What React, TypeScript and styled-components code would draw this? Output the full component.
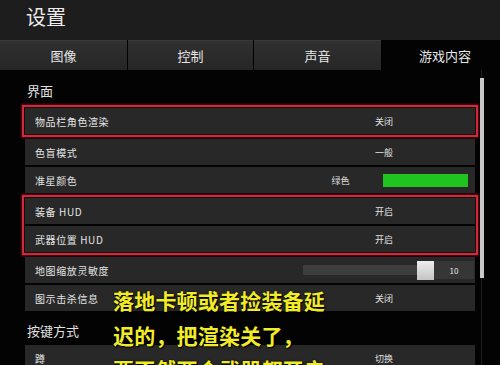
import React from "react";
import styled, { createGlobalStyle } from "styled-components";

const Global = createGlobalStyle`
  html, body { margin: 0; padding: 0; background: #000; }
  body { width: 500px; height: 365px; overflow: hidden; font-family: "Noto Sans CJK SC", "Noto Sans", sans-serif; }
`;

const Page = styled.div`
  position: relative;
  width: 500px;
  height: 365px;
  background: #030303;
  overflow: hidden;
  color: #e2e2e2;
`;

const Header = styled.div`
  height: 40px;
  background: #1d1d1d;
  padding: 4px 0 0 26px;
  box-sizing: border-box;
`;

const Title = styled.div`
  font-size: 20px;
  line-height: 26px;
  color: #ececec;
  letter-spacing: 0px;
`;

const Tabs = styled.div`
  display: grid;
  grid-template-columns: 127px 125px 127px 1fr;
  column-gap: 1px;
  height: 30px;
  background: #000;
`;

const Tab = styled.div<{ $active?: boolean }>`
  display: flex;
  align-items: center;
  justify-content: center;
  font-size: 13px;
  color: #e6e6e6;
  background: ${(p) => (p.$active ? "#030303" : "linear-gradient(#303030, #262626)")};
  border-top: 1px solid ${(p) => (p.$active ? "#030303" : "#3a3a3a")};
  box-sizing: border-box;
  padding-left: ${(p) => (p.$active ? "8px" : "0")};
`;

const Body = styled.div`
  display: flex;
  height: 295px;
`;

const List = styled.div`
  margin-left: 22px;
  width: 456px;
  padding-top: 3px;
  display: flex;
  flex-direction: column;
  gap: 2px;
`;

const SectionTitle = styled.div`
  height: 30px;
  display: flex;
  align-items: flex-end;
  padding: 0 0 4px 5px;
  box-sizing: border-box;
  font-size: 13px;
  line-height: 16px;
  color: #e0e0e0;
  flex-shrink: 0;
`;

const Highlight = styled.div`
  border: 2px solid #cf2a3c;
  box-shadow: 0 0 2px 1px rgba(120, 15, 30, 0.8), inset 0 0 2px rgba(120, 15, 30, 0.8);
  padding: 1px 1px;
  display: flex;
  flex-direction: column;
  gap: 2px;
  flex-shrink: 0;
`;

const Row = styled.div<{ $inset?: boolean }>`
  height: 26px;
  margin: 0 ${(p) => (p.$inset ? "0" : "3px")};
  background: #282828;
  display: flex;
  align-items: center;
  flex-shrink: 0;
`;

const Label = styled.div`
  flex: 1;
  padding-left: 10px;
  font-size: 10px;
  letter-spacing: 0.6px;
  color: #e4e4e4;
`;

const Control = styled.div`
  width: 180px;
  margin-right: 1px;
  height: 100%;
  display: flex;
  align-items: center;
`;

const Value = styled.div`
  flex: 1;
  text-align: center;
  font-size: 9px;
  color: #e0e0e0;
`;

const ColorName = styled.div`
  width: 89px;
  text-align: center;
  font-size: 9px;
  color: #e0e0e0;
  padding-left: 4px;
  box-sizing: border-box;
`;

const Swatch = styled.div`
  width: 85px;
  height: 13px;
  background: #1fc41f;
`;

const Slider = styled.div`
  display: flex;
  align-items: center;
  padding-left: 9px;
  width: 100%;
  height: 18px;
`;

const Track = styled.div`
  width: 114px;
  height: 10px;
  background: #3d3d3d;
`;

const Thumb = styled.div`
  width: 17px;
  height: 19px;
  background: linear-gradient(#eeeeee, #c4c4c4);
`;

const SliderValue = styled.div`
  flex: 1;
  height: 18px;
  background: #363636;
  display: flex;
  align-items: center;
  justify-content: center;
  font-size: 8px;
  color: #e8e8e8;
`;

const ScrollCol = styled.div`
  position: relative;
  width: 5px;
  margin-left: 1px;
  display: flex;
  justify-content: center;
  background: linear-gradient(90deg, transparent 2px, #1e1e1e 2px, #1e1e1e 3px, transparent 3px);
`;

const ScrollThumb = styled.div`
  margin-top: 8px;
  width: 4px;
  height: 200px;
  background: #c9c9c9;
`;

const Caption = styled.div`
  position: absolute;
  left: 113px;
  top: 283px;
  font-size: 21px;
  line-height: 34.5px;
  font-weight: 700;
  color: #f2ec28;
  letter-spacing: 0.2px;
  text-shadow: 0 0 2px #000, 1px 1px 1px #000;
  white-space: nowrap;
`;

type Item =
  | { kind: "text"; label: string; value: string }
  | { kind: "color"; label: string; value: string }
  | { kind: "slider"; label: string; value: string };

const renderRow = (it: Item, inset?: boolean) => (
  <Row key={it.label} $inset={inset}>
    <Label>{it.label}</Label>
    <Control>
      {it.kind === "text" && <Value>{it.value}</Value>}
      {it.kind === "color" && (
        <>
          <ColorName>{it.value}</ColorName>
          <Swatch />
        </>
      )}
      {it.kind === "slider" && (
        <Slider>
          <Track />
          <Thumb />
          <SliderValue>{it.value}</SliderValue>
        </Slider>
      )}
    </Control>
  </Row>
);

export default function App() {
  return (
    <Page>
      <Global />
      <Header>
        <Title>设置</Title>
      </Header>
      <Tabs>
        <Tab>图像</Tab>
        <Tab>控制</Tab>
        <Tab>声音</Tab>
        <Tab $active>游戏内容</Tab>
      </Tabs>
      <Body>
        <List>
          <SectionTitle>界面</SectionTitle>
          <Highlight>{renderRow({ kind: "text", label: "物品栏角色渲染", value: "关闭" }, true)}</Highlight>
          {renderRow({ kind: "text", label: "色盲模式", value: "一般" })}
          {renderRow({ kind: "color", label: "准星颜色", value: "绿色" })}
          <Highlight>
            {renderRow({ kind: "text", label: "装备 HUD", value: "开启" }, true)}
            {renderRow({ kind: "text", label: "武器位置 HUD", value: "开启" }, true)}
          </Highlight>
          {renderRow({ kind: "slider", label: "地图缩放灵敏度", value: "10" })}
          {renderRow({ kind: "text", label: "图示击杀信息", value: "关闭" })}
          <SectionTitle>按键方式</SectionTitle>
          {renderRow({ kind: "text", label: "蹲", value: "切换" })}
        </List>
        <ScrollCol>
          <ScrollThumb />
        </ScrollCol>
      </Body>
      <Caption>
        落地卡顿或者捡装备延
        <br />
        迟的，把渲染关了，
        <br />
        要不然两个武器都开启
      </Caption>
    </Page>
  );
}
